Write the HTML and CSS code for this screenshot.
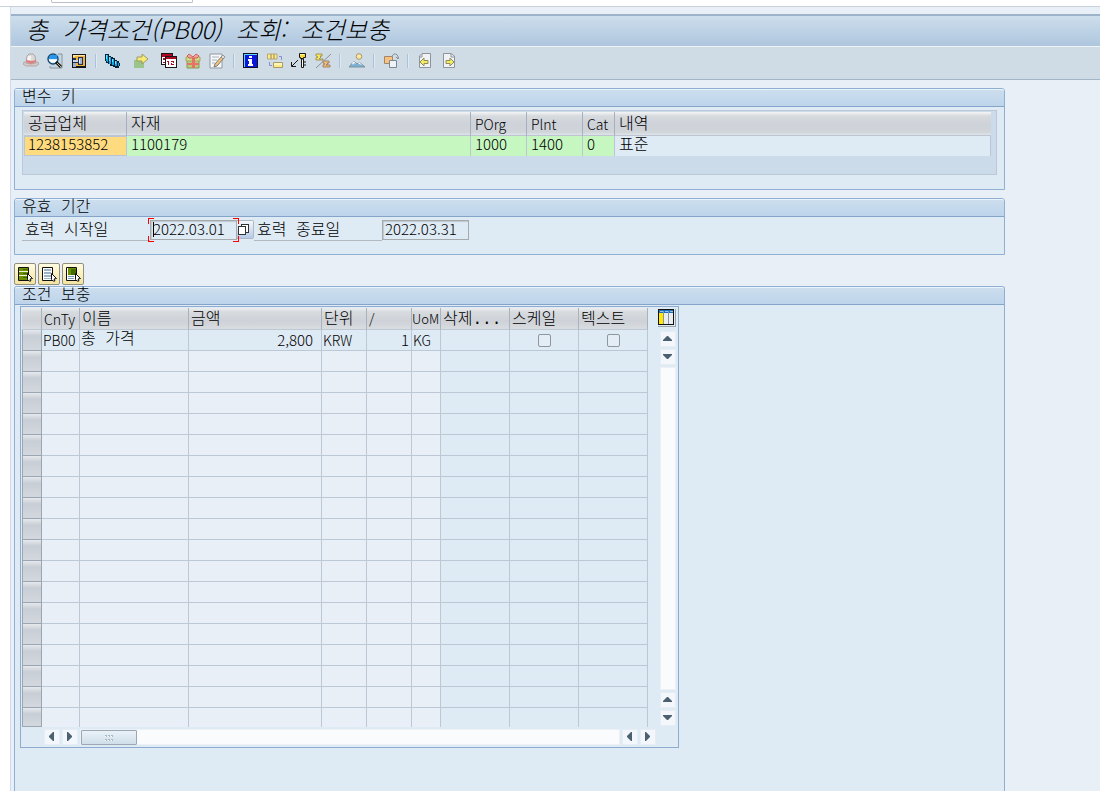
FILE: index.html
```html
<!DOCTYPE html>
<html lang="ko">
<head>
<meta charset="utf-8">
<title>총 가격조건(PB00) 조회: 조건보충</title>
<link rel="stylesheet" href="styles.css">
</head>
<body>
<div class="top-strip"><div class="command-field"></div></div>
<main class="window">
  <h1 class="title ko">총 가격조건<span class="code">(PB00)</span> 조회<span class="code">:</span> 조건보충</h1>
  <div class="toolbar">
    <button class="tool" aria-label="모자"><svg viewBox="0 0 16 16"><path d="M3 9L4 3L6 1H10L12 3L13 9Z" fill="#dcdad9" stroke="#aaa6a5"/><path d="M5 3H8V7H4Z" fill="#f6f4f3"/><path d="M1 9L3 10L8 11L13 10L15 9L16 11L13 13H3L0 11Z" fill="#d6cbc9" stroke="#a39795" stroke-width=".7"/><path d="M3 7L8 8L13 7V9L8 11L3 9Z" fill="#df7f80"/></svg></button>
    <button class="tool" aria-label="조회"><svg viewBox="0 0 16 16"><path d="M3 1H14V14H3Z" fill="#c3d5e3"/><path d="M11 1H15V15H3V13" fill="none" stroke="#87949e"/><circle cx="6" cy="6" r="5" fill="#dceefa" stroke="#16486a" stroke-width="1.4"/><path d="M3 2H10V6H2V4H3Z" fill="#2496ee"/><path d="M2 7H9V9H4Z" fill="#fff"/><path d="M9 9L14 14" stroke="#101820" stroke-width="3"/><path d="M10 10L14 14" stroke="#ddb860"/></svg></button>
    <button class="tool" aria-label="키"><svg viewBox="0 0 16 16" shape-rendering="crispEdges"><path d="M1 1H15V15H1Z" fill="#15151c"/><path d="M2 2H14V13H2Z" fill="#efb23f"/><path d="M2 2H14V3H4V4H2Z" fill="#ffe6a6"/><path d="M2 9H5V14H2Z" fill="#9fb0cb"/><path d="M2 5H5V7H7V4H12V12H7V10H2Z" fill="#23304a"/><path d="M2 7H7V9H2Z" fill="#c9d6ea"/><path d="M8 5H11V11H8Z" fill="#9fb4d4"/><path d="M8 6H9V10H8Z" fill="#e9f0fa"/></svg></button>
    <span class="sep"></span>
    <button class="tool" aria-label="계층"><svg viewBox="0 0 16 16" shape-rendering="crispEdges"><path d="M0 1H4V3H6V4H8V5H10V7H12V8H14V10H15V13H14V15H10V14H8V13H5V11H3V10H1V8H0Z" fill="#062038"/><path d="M1 2H3V9H2V8H1ZM4 4H6V11H4ZM7 6H9V12H7ZM10 8H12V13H10ZM13 10H14V13H13Z" fill="#12a7e6"/><path d="M1 2H2V6H1ZM4 4H5V8H4ZM7 6H8V9H7ZM10 8H11V11H10Z" fill="#6fe6ff"/></svg></button>
    <button class="tool group-gap" aria-label="다음"><svg viewBox="0 0 16 16"><path d="M1 7H11V15H1Z" fill="#9bc58a"/><path d="M4 4H9V1L15 6L9 11V8H4Z" fill="#f7ea75" stroke="#9d9a62"/></svg></button>
    <button class="tool group-gap" aria-label="유효 기간"><svg viewBox="0 0 16 16" shape-rendering="crispEdges"><path d="M0 0H12V12H0Z" fill="#181818"/><path d="M1 1H11V11H1Z" fill="#fff"/><path d="M1 1H11V4H1Z" fill="#b20724"/><path d="M2 5H4V7H2ZM2 9H4V10H2Z" fill="#8b1731"/><path d="M4 3H16V15H4Z" fill="#181818"/><path d="M5 4H15V14H5Z" fill="#fff"/><path d="M5 4H15V6H5Z" fill="#b20724"/><path d="M6 8H8V12H7V9H6ZM10 8H13V10H11V11H13V12H10V10H12V9H10Z" fill="#b20724"/></svg></button>
    <button class="tool" aria-label="보너스"><svg viewBox="0 0 16 16"><path d="M2 7H14V15H2Z" fill="#b7ce74" stroke="#84965b"/><path d="M1 4H15V8H1Z" fill="#d3da80" stroke="#a5a568"/><path d="M7 4H10V15H7ZM2 10H14V12H2Z" fill="#e6726a"/><path d="M8 4L4 1L2 3L4 5H12L14 3L11 1L8 4" fill="#f0a396" stroke="#cd645e"/></svg></button>
    <button class="tool" aria-label="텍스트"><svg viewBox="0 0 16 16"><path d="M1 1H13V15H1Z" fill="#f7f8fa" stroke="#8f97a3"/><path d="M3 4H10M3 7H8M3 10H6" stroke="#a9b0bc"/><path d="M13 3L15 5L8 13L5 14L6 11Z" fill="#f4c273" stroke="#777b83"/><path d="M12 4L14 2L16 4L14 6Z" fill="#e9ddd0" stroke="#777b83" stroke-width=".7"/></svg></button>
    <span class="sep"></span>
    <button class="tool" aria-label="정보"><svg viewBox="0 0 16 16" shape-rendering="crispEdges"><path d="M0 0H15V15H0Z" fill="#101020"/><path d="M1 1H14V14H1Z" fill="#0a18dc"/><path d="M1 1H14V2H2V14H1Z" fill="#62d5f5"/><path d="M6 3H9V5H6ZM5 6H9V11H10V13H5V11H6V8H5Z" fill="#fff"/></svg></button>
    <button class="tool" aria-label="변환"><svg viewBox="0 0 16 16"><path d="M.5 1H4V6H.5ZM4 1H7V6H4ZM7 1H10V6H7Z" fill="#ffe886" stroke="#a79b68" stroke-width=".8"/><path d="M6.500 9.500H15.500V14.500H6.500Z" fill="#ffe886" stroke="#a79b68"/><path d="M7 10H15V12H7Z" fill="#fff6ba"/><path d="M12 3.500H14.500V7M2.500 9V12.500H5" fill="none" stroke="#8d8bd4"/></svg></button>
    <button class="tool" aria-label="키 필드"><svg viewBox="0 0 16 16"><path d="M8.500 .5H14.500V4.500H12.500V5.500H9.500V4.500H8.500Z" fill="#f9d936" stroke="#171717"/><path d="M9 1H13V2H9Z" fill="#fff7a0"/><path d="M10.500 6H12.500V14.500H10.500Z" fill="#fff" stroke="#171717"/><path d="M13 9H15M13 12H15" stroke="#171717"/><path d="M7 7L1 13M.5 9V13.500H5" fill="none" stroke="#171717"/></svg></button>
    <button class="tool" aria-label="합계"><svg viewBox="0 0 16 16"><path d="M1 1H7V3H5L6 4L4 6H8V7H1V5L3 4L1 3Z" fill="#f8e85c" stroke="#a39358"/><path d="M8 8H14V10H12L13 11L11 12H15V14H8V12L10 11L8 10Z" fill="#f6bb78" stroke="#9c8469"/><path d="M16 1L1 15" stroke="#88908f"/></svg></button>
    <span class="sep"></span>
    <button class="tool" aria-label="개요"><svg viewBox="0 0 16 16"><circle cx="10" cy="3.500" r="2.800" fill="#ffe79b" stroke="#a39775"/><path d="M0 14L5 8L8 11L10 9L16 14Z" fill="#78b1d4" stroke="#7f929e"/><path d="M3 10L5 8L7 11L5 10L4 12ZM9 10L10 9L13 12L10 11Z" fill="#f8fcff"/></svg></button>
    <span class="sep"></span>
    <button class="tool" aria-label="복사"><svg viewBox="0 0 16 16"><path d="M1.500 3.500H9.500V10.500H1.500Z" fill="#f8c17d" stroke="#a0866b"/><path d="M6.500 7.500H13.500V14.500H6.500Z" fill="#eef3f8" stroke="#7b8794"/><path d="M9 3L11 1H13L15 3V6M13 4L15 6L16 4" fill="none" stroke="#879099"/></svg></button>
    <span class="sep"></span>
    <button class="tool" aria-label="이전 레코드"><svg viewBox="0 0 16 16"><path d="M5 .5H13.500V14.500H2.500V3Z" fill="#f0f2f5" stroke="#8d949c"/><path d="M5 1V4H2" fill="none" stroke="#8d949c"/><path d="M3 9L7 5V7.500H11V10.500H7V13Z" fill="#f5ec62" stroke="#8b8b5d"/></svg></button>
    <button class="tool" aria-label="다음 레코드"><svg viewBox="0 0 16 16"><path d="M2.500 .5H10L13.500 3V14.500H2.500Z" fill="#f0f2f5" stroke="#8d949c"/><path d="M10 1V4H13" fill="none" stroke="#8d949c"/><path d="M13 9L9 5V7.500H5V10.500H9V13Z" fill="#f5ec62" stroke="#8b8b5d"/></svg></button>
  </div>

  <div class="content">
    <section class="panel">
      <h2 class="panel-title ko">변수 키</h2>
      <div class="key-box">
        <table class="key-table">
          <colgroup><col class="k-vendor"><col class="k-material"><col class="k-org"><col class="k-org"><col class="k-cat"><col></colgroup>
          <thead><tr><th class="ko">공급업체</th><th class="ko">자재</th><th>POrg</th><th>Plnt</th><th>Cat</th><th class="ko">내역</th></tr></thead>
          <tbody><tr><td class="key num selected">1238153852</td><td class="key num">1100179</td><td class="key num">1000</td><td class="key num">1400</td><td class="key num">0</td><td class="ko">표준</td></tr></tbody>
        </table>
      </div>
    </section>

    <section class="panel compact">
      <h2 class="panel-title ko">유효 기간</h2>
      <div class="dates">
        <label class="ko" for="from">효력 시작일</label>
        <span class="focus"><input class="num" id="from" value="2022.03.01" readonly><svg class="corners" viewBox="0 0 91 24" shape-rendering="crispEdges"><path d="M.5 6V.5H6M85 .5H90.500V6M.5 18V23.500H6M85 23.500H90.500V18" fill="none" stroke="#f00"/></svg><i class="caret"></i></span>
        <button class="help" aria-label="입력 도움말"><svg viewBox="0 0 16 18" shape-rendering="crispEdges"><path d="M4.500 3.500H11.500V11.500H4.500Z" fill="#fff" stroke="#333"/><path d="M1.500 5.500H8.500V13.500H1.500Z" fill="#fff" stroke="#333"/></svg></button>
        <label class="ko" for="to">효력 종료일</label>
        <input class="num" id="to" value="2022.03.31" readonly>
      </div>
    </section>

    <div class="selectors">
      <button aria-label="전체 선택"><svg viewBox="0 0 16 16"><path d="M1.500 1.500H11.500V14.500H1.500Z" fill="#f2f2d8" stroke="#111"/><path d="M2 2H11V5H2ZM2 6H11V9H2ZM2 10H11V14H2Z" fill="#6c9000"/><path d="M6 3H11V4H6ZM6 7H11V8H6ZM6 11H11V12H6Z" fill="#3f6a00"/><path d="M10.500 7.500L15.500 12.500L13 13L14 15H12L10.500 13.500Z" fill="#fff" stroke="#111"/></svg></button>
      <button aria-label="전체 선택 취소"><svg viewBox="0 0 16 16"><path d="M1.500 1.500H11.500V14.500H1.500Z" fill="#fff" stroke="#111"/><path d="M3 3H10V5H3ZM3 6H10V8H3ZM3 9H10V11H3ZM3 12H10V13H3Z" fill="#9bb4ca"/><path d="M10.500 7.500L15.500 12.500L13 13L14 15H12L10.500 13.500Z" fill="#fff" stroke="#111"/></svg></button>
      <button aria-label="블록 선택"><svg viewBox="0 0 16 16"><path d="M1.500 1.500H11.500V14.500H1.500Z" fill="#fff" stroke="#111"/><path d="M3 2H11V9H3Z" fill="#6c9000"/><path d="M6 3H11V9H6Z" fill="#426d00"/><path d="M3 10.500H9M3 12.500H9" stroke="#7798b7"/><path d="M10.500 7.500L15.500 12.500L13 13L14 15H12L10.500 13.500Z" fill="#fff" stroke="#111"/></svg></button>
    </div>

    <section class="panel fill">
      <h2 class="panel-title ko">조건 보충</h2>
      <div class="grid-box">
        <table class="grid">
          <colgroup><col class="g-sel"><col class="g-type"><col class="g-name"><col class="g-amount"><col class="g-unit"><col class="g-unit"><col class="g-uom"><col class="g-flag"><col class="g-flag"><col class="g-flag"></colgroup>
          <thead><tr><th></th><th>CnTy</th><th class="ko">이름</th><th class="ko">금액</th><th class="ko">단위</th><th>/</th><th class="tight">UoM</th><th class="ko">삭제<span class="dots">...</span></th><th class="ko">스케일</th><th class="ko">텍스트</th></tr></thead>
          <tbody>
            <tr class="filled"><th></th><td class="type">PB00</td><td class="ko">총 가격</td><td class="num amount">2,800</td><td>KRW</td><td class="num right">1</td><td>KG</td><td></td><td class="check"><input type="checkbox" aria-label="스케일" disabled></td><td class="check"><input type="checkbox" aria-label="텍스트" disabled></td></tr>
            <tr><th></th><td></td><td></td><td></td><td></td><td></td><td></td><td></td><td></td><td></td></tr>
            <tr><th></th><td></td><td></td><td></td><td></td><td></td><td></td><td></td><td></td><td></td></tr>
            <tr><th></th><td></td><td></td><td></td><td></td><td></td><td></td><td></td><td></td><td></td></tr>
            <tr><th></th><td></td><td></td><td></td><td></td><td></td><td></td><td></td><td></td><td></td></tr>
            <tr><th></th><td></td><td></td><td></td><td></td><td></td><td></td><td></td><td></td><td></td></tr>
            <tr><th></th><td></td><td></td><td></td><td></td><td></td><td></td><td></td><td></td><td></td></tr>
            <tr><th></th><td></td><td></td><td></td><td></td><td></td><td></td><td></td><td></td><td></td></tr>
            <tr><th></th><td></td><td></td><td></td><td></td><td></td><td></td><td></td><td></td><td></td></tr>
            <tr><th></th><td></td><td></td><td></td><td></td><td></td><td></td><td></td><td></td><td></td></tr>
            <tr><th></th><td></td><td></td><td></td><td></td><td></td><td></td><td></td><td></td><td></td></tr>
            <tr><th></th><td></td><td></td><td></td><td></td><td></td><td></td><td></td><td></td><td></td></tr>
            <tr><th></th><td></td><td></td><td></td><td></td><td></td><td></td><td></td><td></td><td></td></tr>
            <tr><th></th><td></td><td></td><td></td><td></td><td></td><td></td><td></td><td></td><td></td></tr>
            <tr><th></th><td></td><td></td><td></td><td></td><td></td><td></td><td></td><td></td><td></td></tr>
            <tr><th></th><td></td><td></td><td></td><td></td><td></td><td></td><td></td><td></td><td></td></tr>
            <tr><th></th><td></td><td></td><td></td><td></td><td></td><td></td><td></td><td></td><td></td></tr>
            <tr><th></th><td></td><td></td><td></td><td></td><td></td><td></td><td></td><td></td><td></td></tr>
            <tr><th></th><td></td><td></td><td></td><td></td><td></td><td></td><td></td><td></td><td></td></tr>
          </tbody>
        </table>
        <div class="v-scroll">
          <button class="config" aria-label="테이블 설정"><svg viewBox="0 0 16 16" shape-rendering="crispEdges"><path d="M0 0H16V16H0Z" fill="#111"/><path d="M1 1H15V4H1Z" fill="#1d6fc0"/><path d="M1 4H5V15H1Z" fill="#ffe800"/><path d="M6 4H10V15H6ZM11 4H15V15H11Z" fill="#e9edf0"/><path d="M5 2H6V15H5ZM10 2H11V15H10Z" fill="#8a979e"/><path d="M2 2H5V3H2ZM7 2H10V3H7ZM12 2H15V3H12Z" fill="#89c4ec"/></svg></button>
          <button class="arrow" aria-label="위로"><svg viewBox="0 0 14 14"><path d="M2 8L6 4H7L11 8V9H2Z"/></svg></button>
          <button class="arrow" aria-label="아래로"><svg viewBox="0 0 14 14"><path d="M2 5V4H11V5L7 9H6Z"/></svg></button>
          <div class="track"></div>
          <button class="arrow" aria-label="위로"><svg viewBox="0 0 14 14"><path d="M2 8L6 4H7L11 8V9H2Z"/></svg></button>
          <button class="arrow" aria-label="아래로"><svg viewBox="0 0 14 14"><path d="M2 5V4H11V5L7 9H6Z"/></svg></button>
        </div>
        <div class="h-scroll">
          <button class="arrow" aria-label="왼쪽"><svg viewBox="0 0 14 14"><path d="M9 2V11H8L4 7V6L8 2Z"/></svg></button>
          <button class="arrow" aria-label="오른쪽"><svg viewBox="0 0 14 14"><path d="M4 2V11H5L9 7V6L5 2Z"/></svg></button>
          <div class="track"><div class="thumb"><svg viewBox="0 0 10 6" shape-rendering="crispEdges"><path d="M1 0H3V2H1ZM4 0H6V2H4ZM7 0H9V2H7ZM1 4H3V6H1ZM4 4H6V6H4ZM7 4H9V6H7Z" fill="#a9b9c6"/><path d="M1 1H2V2H1ZM4 1H5V2H4ZM7 1H8V2H7ZM1 5H2V6H1ZM4 5H5V6H4ZM7 5H8V6H7Z" fill="#fff"/></svg></div></div>
          <button class="arrow" aria-label="왼쪽"><svg viewBox="0 0 14 14"><path d="M9 2V11H8L4 7V6L8 2Z"/></svg></button>
          <button class="arrow" aria-label="오른쪽"><svg viewBox="0 0 14 14"><path d="M4 2V11H5L9 7V6L5 2Z"/></svg></button>
        </div>
      </div>
    </section>
  </div>
</main>
</body>
</html>
```
FILE: styles.css
```css
* { box-sizing: border-box; }

body {
  margin: 0;
  min-height: 100vh;
  display: flex;
  flex-direction: column;
  background: #fff;
  color: #000;
  font: 300 14px/20px "Noto Sans CJK KR", sans-serif;
}

button { padding: 0; border: 0; background: none; font: inherit; }
svg { display: block; }

/* The monospaced family first gives Korean labels their wide word space. */
.ko { font-family: "Liberation Mono", "Noto Sans CJK KR", monospace; font-size: 16px; }
.num { font-family: "Noto Sans CJK KR", sans-serif; font-size: 15px; }

.top-strip { height: 7px; border-bottom: 1px solid #c9d2dc; }
.command-field {
  width: 142px;
  height: 3px;
  margin-left: 51px;
  border: 1px solid #b9bec4;
  border-top: 0;
  border-radius: 0 0 2px 2px;
}

.window {
  flex: 1;
  display: flex;
  flex-direction: column;
  margin-left: 10px;
  border-left: 1px solid #cfdaeb;
  background: #e8eff7;
  padding-top: 7px;
}

.title {
  margin: 0;
  height: 33px;
  padding-left: 15px;
  border-top: 2px solid #9db3ca;
  border-bottom: 1px solid #eff4f8;
  background: linear-gradient(#cddeec, #aec6de);
  font-size: 24px;
  font-weight: 300;
  font-style: italic;
  line-height: 26px;
  white-space: nowrap;
}
.title .code { font-family: "Noto Sans CJK KR", sans-serif; }

.toolbar {
  display: flex;
  align-items: center;
  gap: 8px;
  height: 33px;
  padding: 0 12px 5px;
  border-bottom: 1px solid #a3b6c8;
  background: #cfdce6;
}
.tool, .tool svg { width: 16px; height: 16px; }
.group-gap { margin-left: 4px; }
.sep { width: 2px; height: 14px; background: #a9c1dc; border-right: 1px solid #dfe9f1; }

.content {
  flex: 1;
  display: flex;
  flex-direction: column;
  margin: 8px 95px 0 3px;
}

.panel {
  margin-bottom: 8px;
  border: 1px solid #8fb0d3;
  border-radius: 3px 3px 0 0;
  background: #deeaf4;
}
.panel.fill { flex: 1; margin-bottom: 0; border-bottom: 0; }
.panel-title {
  margin: 0;
  height: 18px;
  padding-left: 7px;
  border-top: 1px solid #eaf4fc;
  border-bottom: 1px solid #84a4ca;
  border-radius: 2px 2px 0 0;
  background: linear-gradient(#ccdeee, #bdd4ea);
  font-weight: 300;
  line-height: 17px;
}

.key-box {
  margin: 3px 7px 14px;
  padding: 1px 5px 18px 1px;
  border: 1px solid #bcc8d8;
  background: #cbdbea;
}

table { table-layout: fixed; border-collapse: separate; border-spacing: 0; }
th, td {
  padding: 0 0 0 3px;
  font-weight: 300;
  text-align: left;
  white-space: nowrap;
}

.key-table { width: 100%; }
.k-vendor { width: 103px; }
.k-material { width: 344px; }
.k-org { width: 56px; }
.k-cat { width: 32px; }
.key-table th {
  height: 24px;
  padding-left: 4px;
  border-right: 1px solid #a4b0bd;
  border-bottom: 1px solid #bcc5d4;
  background: linear-gradient(#f4f5f6, #d7dbde 4px, #ced2d9 12px, #d0d5da 20px, #e0e4e8);
}
th.ko { padding-top: 3px; }
.key-table th:last-child { border-right: 0; }
.key-table td {
  height: 20px;
  border-right: 1px solid #bcc5d4;
  background: #deebf5;
  line-height: 12px;
  padding-left: 4px;
}
.key-table .key { padding-bottom: 5px; background: #c6f7c0; }
.key-table .selected {
  padding-left: 3px;
  border: 1px solid #bcc5d4;
  background: #ffdb80;
}

.dates { display: flex; align-items: flex-start; height: 37px; padding: 3px 7px 0; }
.dates label {
  width: 128px;
  height: 21px;
  padding-left: 3px;
  border-bottom: 1px solid #b2babf;
  line-height: 22px;
}
.dates .num {
  display: block;
  width: 87px;
  height: 20px;
  padding: 0 0 3px 2px;
  border: 1px solid #a7aaad;
  border-radius: 0;
  outline: 0;
  background: #deeaf4;
  box-shadow: inset 1px 1px 1px #bdc7d0;
  font-weight: 300;
}
.focus { position: relative; }
.corners { position: absolute; left: -2px; top: -2px; width: 91px; height: 24px; }
.caret { position: absolute; left: 3px; top: 2px; width: 1px; height: 15px; background: #000; }
.help {
  width: 17px;
  height: 19px;
  border: 1px solid #b0b9c3;
  border-left: 0;
  border-radius: 0 2px 2px 0;
  background: linear-gradient(#f4f8fc, #b5cae8);
}
.help svg { width: 16px; height: 18px; }

.compact { margin-bottom: 8px; }
.selectors { display: flex; gap: 2px; margin-bottom: 1px; }
.selectors button {
  width: 22px;
  height: 22px;
  padding: 2px;
  border: 1px solid #918f7e;
  border-radius: 2px;
  background: linear-gradient(#fffce0, #f4e3a0);
}
.selectors svg { width: 16px; height: 16px; }

.grid-box {
  display: grid;
  grid-template-columns: auto 19px;
  column-gap: 10px;
  row-gap: 2px;
  width: fit-content;
  margin: 1px 0 0 5px;
  padding: 1px 1px 2px;
  border: 1px solid #8fabd0;
}
.grid { width: 626px; }
.g-sel { width: 20px; }
.g-type { width: 38px; }
.g-name { width: 109px; }
.g-amount { width: 133px; }
.g-unit { width: 45px; }
.g-uom { width: 29px; }
.g-flag { width: 69px; }
.grid td {
  height: 21px;
  padding-left: 1px;
  border-right: 1px solid #bcc8d6;
  border-bottom: 1px solid #bcc8d6;
  background: #e8eff6;
}
.grid thead th {
  height: 22px;
  padding-left: 2px;
  border-right: 1px solid #a9b3bd;
  border-bottom: 1px solid #bcc8d6;
  background: linear-gradient(#eceef0, #d7dbde 4px, #ced2d8 13px, #d9dde0);
  line-height: 18px;
}
.grid thead .tight { padding-left: 0; font-size: 13px; }
.grid tbody th {
  border: 1px solid #9aa7b3;
  border-top: 0;
  background: linear-gradient(#e6e9ec, #c8ced5 6px, #d2d8dd);
}
.grid .filled td, .grid td:nth-child(n+8) { background: #deeaf4; }
.grid tbody tr:last-child td { height: 19px; border-bottom: 0; }
.grid tbody tr:last-child th { height: 19px; }
.grid .amount { padding-right: 8px; text-align: right; }
.grid .right { padding-right: 2px; text-align: right; }
.grid .check { padding: 0; }
.check input {
  appearance: none;
  display: block;
  width: 13px;
  height: 13px;
  margin: 0 auto;
  border: 1px solid #8e979e;
  border-radius: 2px;
  background: #e4edf5;
}

.v-scroll { display: flex; flex-direction: column; align-items: flex-end; gap: 2px; padding: 1px 1px 1px 0; }
.config {
  width: 18px;
  height: 18px;
  margin-bottom: 2px;
  padding: 0 1px 1px 0;
  border-right: 1px solid #9aa3aa;
  border-bottom: 1px solid #9aa3aa;
}
.config svg { width: 16px; height: 16px; }
.arrow { width: 16px; height: 16px; border: 1px solid #e6edf4; background: #f3f7fb; }
.arrow svg { width: 14px; height: 14px; fill: #4b6070; }
.track { flex: 1; background: #fafbfc; border: 1px solid #edf1f6; }
.v-scroll .track { width: 16px; }
.h-scroll { grid-column: 1 / -1; display: flex; gap: 2px; margin: 0 21px 0 22px; }
.h-scroll .track { height: 16px; }
.thumb {
  display: grid;
  place-items: center;
  width: 56px;
  height: 15px;
  border: 1px solid #9ba8b4;
  border-radius: 1px;
  background: linear-gradient(#eaf2f8, #cfdeea);
}
.thumb svg { width: 10px; height: 6px; }
```
